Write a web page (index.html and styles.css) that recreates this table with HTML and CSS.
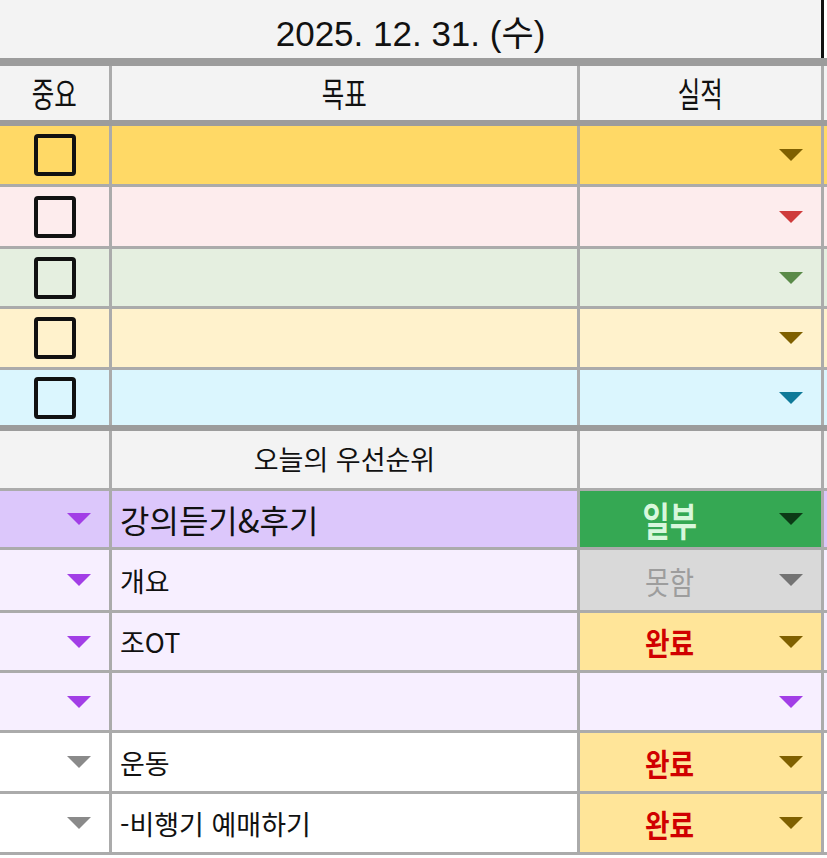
FILE: index.html
```html
<!DOCTYPE html>
<html lang="ko">
<head>
<meta charset="utf-8">
<title>2025. 12. 31.</title>
<link rel="stylesheet" href="styles.css">
</head>
<body>
<div class="sheet">
  <div class="date-row">
    <div class="date">2025. 12. 31. (수)</div>
    <div class="date-edge"></div>
    <div class="date-out"></div>
  </div>

  <div class="row head thick h54">
    <div class="cell center"><span class="narrow">중요</span></div>
    <div class="cell center"><span class="narrow">목표</span></div>
    <div class="cell center"><span class="narrow">실적</span></div>
    <div class="cell"></div>
  </div>

  <div class="row c-yellow h58">
    <div class="cell center"><span class="box"></span></div>
    <div class="cell"></div>
    <div class="cell status"><span class="label"></span><span class="tri t-gold"></span></div>
    <div class="cell"></div>
  </div>
  <div class="row c-pink h59">
    <div class="cell center"><span class="box"></span></div>
    <div class="cell"></div>
    <div class="cell status"><span class="label"></span><span class="tri t-red"></span></div>
    <div class="cell"></div>
  </div>
  <div class="row c-green h57">
    <div class="cell center"><span class="box"></span></div>
    <div class="cell"></div>
    <div class="cell status"><span class="label"></span><span class="tri t-green"></span></div>
    <div class="cell"></div>
  </div>
  <div class="row c-cream h58">
    <div class="cell center"><span class="box"></span></div>
    <div class="cell"></div>
    <div class="cell status"><span class="label"></span><span class="tri t-gold"></span></div>
    <div class="cell"></div>
  </div>
  <div class="row c-cyan thick h55">
    <div class="cell center"><span class="box"></span></div>
    <div class="cell"></div>
    <div class="cell status"><span class="label"></span><span class="tri t-teal"></span></div>
    <div class="cell"></div>
  </div>

  <div class="row head h57">
    <div class="cell"></div>
    <div class="cell center sub">오늘의 우선순위</div>
    <div class="cell"></div>
    <div class="cell"></div>
  </div>

  <div class="row c-lav h56">
    <div class="cell end"><span class="tri t-purple"></span></div>
    <div class="cell text big">강의듣기&amp;후기</div>
    <div class="cell status s-green"><span class="label"><span class="narrow bold">일부</span></span><span class="tri t-dark"></span></div>
    <div class="cell"></div>
  </div>
  <div class="row c-lav2 h60">
    <div class="cell end"><span class="tri t-purple"></span></div>
    <div class="cell text">개요</div>
    <div class="cell status s-gray"><span class="label"><span class="narrow2">못함</span></span><span class="tri t-gray"></span></div>
    <div class="cell"></div>
  </div>
  <div class="row c-lav2 h57">
    <div class="cell end"><span class="tri t-purple"></span></div>
    <div class="cell text">조OT</div>
    <div class="cell status s-gold"><span class="label"><span class="narrow2 bold red">완료</span></span><span class="tri t-gold"></span></div>
    <div class="cell"></div>
  </div>
  <div class="row c-lav2 h57">
    <div class="cell end"><span class="tri t-purple"></span></div>
    <div class="cell text"></div>
    <div class="cell status"><span class="label"></span><span class="tri t-purple"></span></div>
    <div class="cell"></div>
  </div>
  <div class="row c-white h58">
    <div class="cell end"><span class="tri t-gray"></span></div>
    <div class="cell text">운동</div>
    <div class="cell status s-gold"><span class="label"><span class="narrow2 bold red">완료</span></span><span class="tri t-gold"></span></div>
    <div class="cell"></div>
  </div>
  <div class="row c-white h58">
    <div class="cell end"><span class="tri t-gray"></span></div>
    <div class="cell text">-비행기 예매하기</div>
    <div class="cell status s-gold"><span class="label"><span class="narrow2 bold red">완료</span></span><span class="tri t-gold"></span></div>
    <div class="cell"></div>
  </div>
</div>
</body>
</html>
```

FILE: styles.css
```css
html, body {
  margin: 0;
  padding: 0;
  background: #ffffff;
}

body {
  font-family: "Noto Sans CJK KR", "Noto Sans", sans-serif;
  color: #111111;
}

.sheet {
  width: 827px;
  display: flex;
  flex-direction: column;
}

/* date row */
.date-row {
  display: grid;
  grid-template-columns: 821px 3px 1fr;
  height: 58px;
  border-bottom: 8px solid #9c9c9c;
}

.date {
  background: #f3f3f3;
  display: flex;
  align-items: center;
  justify-content: center;
  font-family: "Liberation Sans", "Noto Sans CJK KR", sans-serif;
  font-size: 35px;
  color: #111111;
  padding-top: 2px;
}

.date-edge {
  background: #111111;
}

.date-out {
  background: #ffffff;
}

/* generic row */
.row {
  display: grid;
  grid-template-columns: 109px 465px 241px 1fr;
  column-gap: 3px;
  background: #ababab;
  border-bottom: 3px solid #ababab;
}

.row.thick {
  border-bottom: 6px solid #9c9c9c;
}

.h54 { height: 54px; }
.h55 { height: 55px; }
.h56 { height: 56px; }
.h57 { height: 57px; }
.h58 { height: 58px; }
.h59 { height: 59px; }
.h60 { height: 60px; }

.cell {
  display: flex;
  align-items: center;
  min-width: 0;
  overflow: hidden;
}

.center {
  justify-content: center;
}

.end {
  justify-content: flex-end;
  padding-right: 18px;
}

.text {
  padding-left: 8px;
  font-size: 27px;
  white-space: nowrap;
}

.text.big {
  font-size: 32px;
}

.sub {
  font-size: 27px;
  padding-bottom: 2px;
}

/* row colours */
.head .cell { background: #f3f3f3; }
.c-yellow .cell { background: #ffd966; }
.c-pink .cell { background: #fdeced; }
.c-green .cell { background: #e5efe0; }
.c-cream .cell { background: #fff2cc; }
.c-cyan .cell { background: #dbf6fe; }
.c-lav .cell { background: #dcc7fb; }
.c-lav2 .cell { background: #f7efff; }
.c-white .cell { background: #ffffff; }

.row .cell.s-green { background: #35a853; }
.row .cell.s-gray { background: #d9d9d9; }
.row .cell.s-gold { background: #ffe599; }

/* header narrow text */
.narrow {
  display: inline-block;
  font-size: 34px;
  transform: scaleX(0.72);
  line-height: 1;
}

.narrow.bold {
  font-size: 40px;
  font-weight: 700;
  color: #d8f7dc;
  transform: scaleX(0.74);
}

.narrow2 {
  display: inline-block;
  font-size: 31px;
  line-height: 1;
  transform: scaleX(0.86);
  color: #9d9d9d;
}

.narrow2.bold {
  font-weight: 700;
}

.red {
  color: #d00000;
}

/* status cell */
.status {
  padding-right: 18px;
}

.label {
  flex: 1;
  display: flex;
  justify-content: center;
  align-items: center;
  margin-right: 19px;
}

/* checkbox */
.box {
  width: 34px;
  height: 34px;
  border: 4px solid #111111;
  border-radius: 4px;
  background: transparent;
}

/* triangles */
.tri {
  width: 0;
  height: 0;
  border-left: 12px solid transparent;
  border-right: 12px solid transparent;
  border-top: 12px solid #888888;
  flex: none;
}

.t-gold { border-top-color: #7f6000; }
.t-red { border-top-color: #cf3b3b; }
.t-green { border-top-color: #5a8a48; }
.t-teal { border-top-color: #0f7a98; }
.t-purple { border-top-color: #a23ee6; }
.t-gray { border-top-color: #8a8a8a; }
.t-dark { border-top-color: #0c3a16; }
.s-gray .t-gray { border-top-color: #737373; }
```
